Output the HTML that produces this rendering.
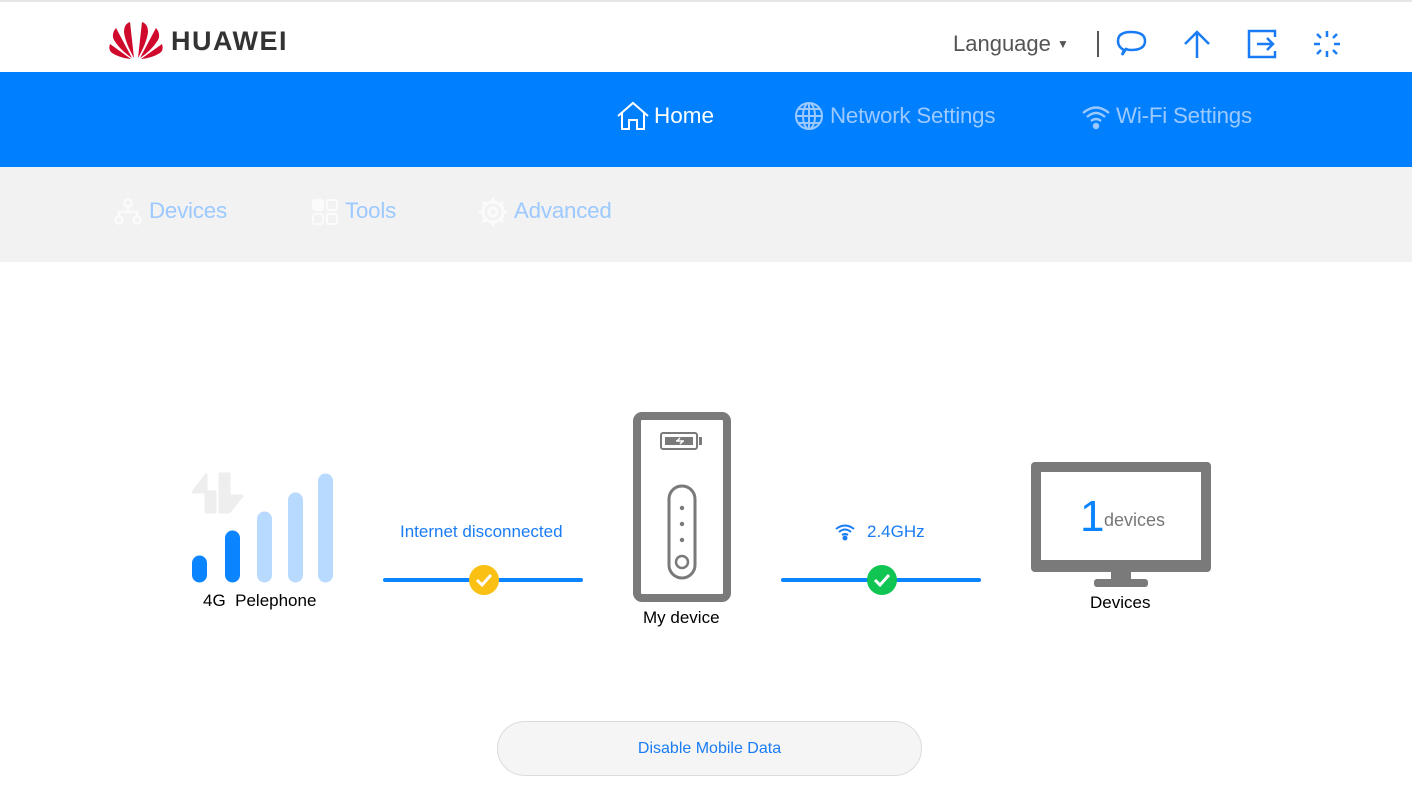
<!DOCTYPE html>
<html><head><meta charset="utf-8"><style>
*{margin:0;padding:0;box-sizing:border-box}
body{width:1412px;height:811px;background:#fff;font-family:"Liberation Sans",Arial,sans-serif;position:relative;overflow:hidden}
.a{position:absolute}
</style></head><body>
<div class="a" style="left:0;top:0;width:1412px;height:2px;background:#e6e6e6"></div>
<svg class="a" style="left:108px;top:18px" width="56" height="42" viewBox="0 0 56 42">
<g fill="#cf0a2c">
<path d="M26 40 L22 4 Q16 6 16 14 Q17 24 26 40Z"/>
<path d="M30 40 L34 4 Q40 6 40 14 Q39 24 30 40Z"/>
<path d="M24 40 L8 10 Q3 16 6 22 Q12 32 24 40Z"/>
<path d="M32 40 L48 10 Q53 16 50 22 Q44 32 32 40Z"/>
<path d="M23 41 L2 26 Q0 32 4 35 Q12 40 23 41Z"/>
<path d="M33 41 L54 26 Q56 32 52 35 Q44 40 33 41Z"/>
</g></svg>
<div class="a" style="left:171px;top:26px;font-size:27px;font-weight:bold;color:#333;letter-spacing:1.5px">HUAWEI</div>
<div class="a" style="left:953px;top:31px;font-size:22px;color:#555">Language <span style="font-size:12px;vertical-align:3px">▼</span></div>
<div class="a" style="left:1097px;top:31px;width:2px;height:26px;background:#555"></div>
<svg class="a" style="left:1116px;top:29px" width="32" height="30" viewBox="0 0 32 30" fill="none" stroke="#1a7cf5" stroke-width="2.5"><path d="M8 21 Q2 18 2 12 Q2 3 15 3 Q29 3 29 12 Q29 21 15 21 Q12 21 10 20 L6 26 Z"/></svg>
<svg class="a" style="left:1182px;top:29px" width="30" height="30" viewBox="0 0 30 30" fill="none" stroke="#1a7cf5" stroke-width="2.5"><path d="M15 29V3M3 15L15 3L27 15"/></svg>
<svg class="a" style="left:1247px;top:29px" width="32" height="30" viewBox="0 0 32 30" fill="none" stroke="#1a7cf5" stroke-width="2.5"><path d="M28 8V2H2V28H28V22M10 15H26M20 9L26 15L20 21"/></svg>
<svg class="a" style="left:1312px;top:30px" width="30" height="28" viewBox="0 0 30 28" stroke="#1a7cf5" stroke-width="2.5"><path d="M15 1V7M15 21V27M2 14H8M22 14H28M5 4L9 8M21 20L25 24M25 4L21 8M9 20L5 24"/></svg>
<div class="a" style="left:0;top:72px;width:1412px;height:95px;background:#0080ff"></div>
<svg class="a" style="left:616px;top:101px" width="34" height="30" viewBox="0 0 34 30" fill="none" stroke="#fff" stroke-width="2"><path d="M2 15L17 2L32 15M6 12V28H13V19H21V28H28V12"/></svg>
<div class="a" style="left:654px;top:103px;font-size:22.5px;color:#fff">Home</div>
<svg class="a" style="left:794px;top:101px" width="30" height="30" viewBox="0 0 30 30" fill="none" stroke="#9cc9ff" stroke-width="2"><circle cx="15" cy="15" r="13"/><ellipse cx="15" cy="15" rx="6" ry="13"/><path d="M2 15H28M4 8H26M4 22H26M15 2V28"/></svg>
<div class="a" style="left:830px;top:103px;font-size:22.3px;color:#9cc9ff;letter-spacing:-0.2px">Network Settings</div>
<svg class="a" style="left:1081px;top:104px" width="30" height="26" viewBox="0 0 30 26" fill="none" stroke="#9cc9ff" stroke-width="2.4"><path d="M2 9Q15 -2 28 9M6 13Q15 5 24 13M10 17Q15 13 20 17"/><circle cx="15" cy="22" r="2" fill="#9cc9ff"/></svg>
<div class="a" style="left:1116px;top:103px;font-size:22.3px;color:#9cc9ff;letter-spacing:-0.2px">Wi-Fi Settings</div>
<div class="a" style="left:0;top:167px;width:1412px;height:95px;background:#f2f2f2"></div>
<svg class="a" style="left:114px;top:198px" width="28" height="28" viewBox="0 0 28 28" fill="none" stroke="#fbfbfb" stroke-width="2.5"><circle cx="14" cy="5" r="3.5"/><circle cx="5" cy="22" r="3.5"/><circle cx="23" cy="22" r="3.5"/><path d="M14 9V14M5 18V14H23V18"/></svg>
<div class="a" style="left:149px;top:198px;font-size:22.3px;color:#9cc9ff;letter-spacing:-0.2px">Devices</div>
<svg class="a" style="left:311px;top:198px" width="28" height="28" viewBox="0 0 28 28" fill="#fbfbfb" stroke="#fbfbfb" stroke-width="2"><rect x="2" y="2" width="10" height="10" rx="2"/><rect x="16" y="2" width="10" height="10" rx="2" fill="none"/><rect x="2" y="16" width="10" height="10" rx="2" fill="none"/><rect x="16" y="16" width="10" height="10" rx="2" fill="none"/></svg>
<div class="a" style="left:345px;top:198px;font-size:22.3px;color:#9cc9ff;letter-spacing:-0.2px">Tools</div>
<svg class="a" style="left:477px;top:196px" width="32" height="32" viewBox="0 0 32 32" fill="none" stroke="#fbfbfb" stroke-width="3"><circle cx="16" cy="16" r="10"/><circle cx="16" cy="16" r="4"/><path d="M16 2V6M16 26V30M2 16H6M26 16H30M6 6L9 9M23 23L26 26M26 6L23 9M9 23L6 26"/></svg>
<div class="a" style="left:514px;top:198px;font-size:22.3px;color:#9cc9ff;letter-spacing:-0.2px">Advanced</div>
<svg class="a" style="left:190px;top:470px" width="150" height="116" viewBox="0 0 150 116">
<g fill="#eeeeee" stroke="#eeeeee" stroke-width="3" stroke-linejoin="round"><path d="M3 22L16 5L16 42L25 42L25 22Z"/><path d="M30 4L39 4L39 26L52 26L39 42L30 42Z"/></g>
<g stroke-linecap="round" stroke-width="15"><path d="M9.5 93V105" stroke="#0a84ff"/><path d="M42.5 68V105" stroke="#0a84ff"/><path d="M74.5 49V105" stroke="#b8dafe"/><path d="M105.5 30V105" stroke="#b8dafe"/><path d="M135.5 11V105" stroke="#b8dafe"/></g></svg>
<div class="a" style="left:203px;top:591px;font-size:17px;color:#000">4G&nbsp; Pelephone</div>
<div class="a" style="left:400px;top:522px;font-size:17px;color:#1a7cf5">Internet disconnected</div>
<div class="a" style="left:383px;top:578px;width:200px;height:4px;background:#0a84ff;border-radius:2px"></div>
<svg class="a" style="left:469px;top:565px" width="30" height="30" viewBox="0 0 30 30"><circle cx="15" cy="15" r="15" fill="#fbc014"/><path d="M8 15L13 20L22 10" fill="none" stroke="#fff" stroke-width="3"/></svg>
<svg class="a" style="left:632px;top:411px" width="100" height="192" viewBox="0 0 100 192">
<rect x="5" y="5" width="90" height="182" rx="5" fill="#fff" stroke="#7a7a7a" stroke-width="8"/>
<rect x="29" y="22" width="36" height="16" rx="2" fill="none" stroke="#7a7a7a" stroke-width="2"/><rect x="33" y="26" width="28" height="8" fill="#7a7a7a"/><path d="M44 30H52M48 27L45 30M48 33L51 30" stroke="#fff" stroke-width="1.5"/><rect x="67" y="26" width="3" height="8" fill="#7a7a7a"/>
<rect x="37" y="75" width="26" height="92" rx="13" fill="none" stroke="#7a7a7a" stroke-width="3"/>
<circle cx="50" cy="97" r="2.2" fill="#7a7a7a"/><circle cx="50" cy="113" r="2.2" fill="#7a7a7a"/><circle cx="50" cy="129" r="2.2" fill="#7a7a7a"/><circle cx="50" cy="151" r="6" fill="none" stroke="#7a7a7a" stroke-width="2.5"/></svg>
<div class="a" style="left:643px;top:608px;font-size:17px;color:#000">My device</div>
<svg class="a" style="left:834px;top:523px" width="22" height="18" viewBox="0 0 22 18" fill="none" stroke="#1a7cf5" stroke-width="2"><path d="M2 6Q11 -1 20 6M5 9Q11 4 17 9M8 12Q11 10 14 12"/><circle cx="11" cy="15" r="1.5" fill="#1a7cf5"/></svg>
<div class="a" style="left:867px;top:522px;font-size:17px;color:#1a7cf5">2.4GHz</div>
<div class="a" style="left:781px;top:578px;width:200px;height:4px;background:#0a84ff;border-radius:2px"></div>
<svg class="a" style="left:867px;top:565px" width="30" height="30" viewBox="0 0 30 30"><circle cx="15" cy="15" r="15" fill="#10c552"/><path d="M8 15L13 20L22 10" fill="none" stroke="#fff" stroke-width="3"/></svg>
<svg class="a" style="left:1030px;top:461px" width="182" height="127" viewBox="0 0 182 127">
<rect x="1" y="1" width="180" height="110" rx="4" fill="#7a7a7a"/><rect x="11" y="11" width="160" height="88" fill="#fff"/>
<rect x="81" y="111" width="20" height="9" fill="#7a7a7a"/><rect x="64" y="118" width="54" height="8" rx="3" fill="#7a7a7a"/></svg>
<div class="a" style="left:1080px;top:492px;font-size:44px;color:#0a84ff">1</div>
<div class="a" style="left:1104px;top:510px;font-size:18px;color:#777">devices</div>
<div class="a" style="left:1090px;top:593px;font-size:17px;color:#000">Devices</div>
<div class="a" style="left:497px;top:721px;width:425px;height:55px;background:#f5f5f5;border:1px solid #dcdcdc;border-radius:28px;text-align:center;line-height:53px;font-size:16px;color:#1a7cf5">Disable Mobile Data</div>
</body></html>
